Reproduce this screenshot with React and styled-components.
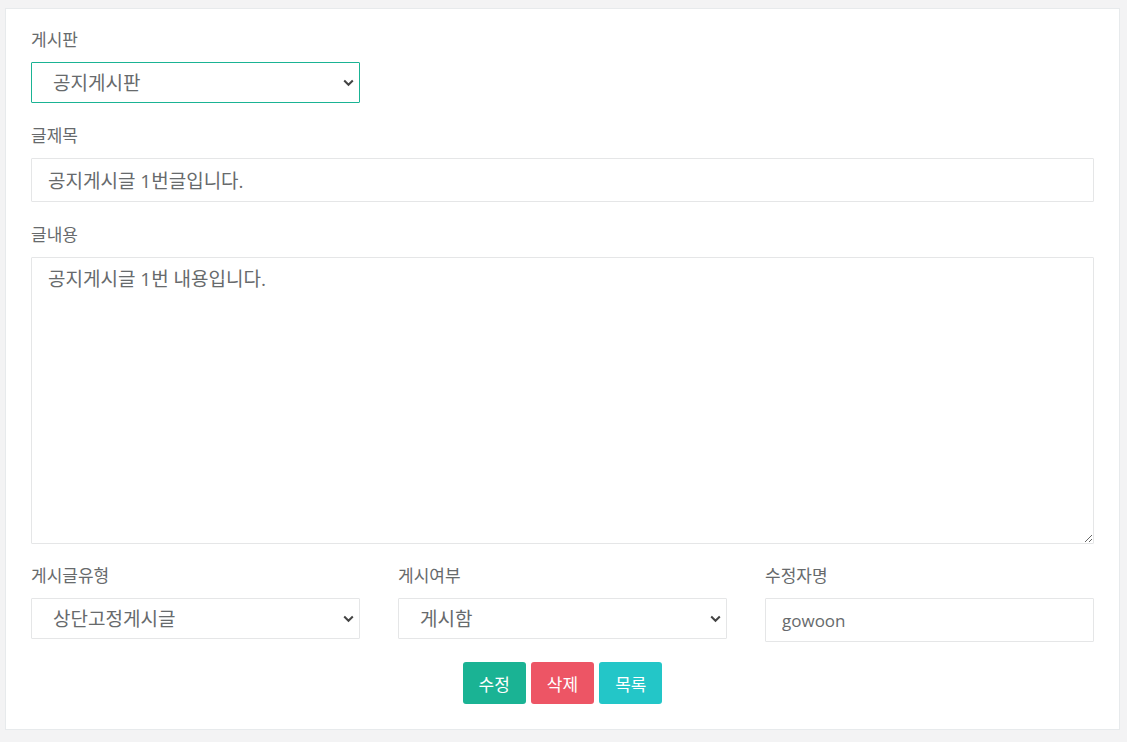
import React from 'react';
import styled, { createGlobalStyle } from 'styled-components';

const GlobalStyle = createGlobalStyle`
  * { box-sizing: border-box; }
  html, body { margin: 0; padding: 0; background: #f3f3f4; }
  body {
    padding: 8px 7px 13px 5px;
    font-family: "Open Sans", "Noto Sans CJK KR", sans-serif;
    color: #676a6c;
  }
`;

const Card = styled.div`
  background: #fff;
  border: 1px solid #e7eaec;
  padding: 19px 25px 25px 25px;
`;

const Group = styled.div`
  margin-bottom: ${({ gap }) => gap || '21px'};
  width: ${({ narrow }) => (narrow ? '329px' : 'auto')};
`;

const Label = styled.label`
  display: block;
  font-size: 17px;
  line-height: 24px;
  margin-bottom: 10px;
  color: #676a6c;
`;

const fieldBase = `
  display: block;
  width: 100%;
  font-family: "Open Sans", "Noto Sans CJK KR", sans-serif;
  color: #676a6c;
  background: #fff;
  border: 1px solid #e5e6e7;
  border-radius: 1px;
  outline: none;
`;

const Input = styled.input`
  ${fieldBase}
  font-size: ${({ latin }) => (latin ? '17px' : '19px')};
  height: 44px;
  padding: 0 16px;
`;

const TextArea = styled.textarea`
  ${fieldBase}
  font-size: 19px;
  height: 287px;
  padding: 9px 16px;
  line-height: 24px;
  resize: vertical;
`;

const SelectWrap = styled.div`
  position: relative;
`;

const Select = styled.select`
  ${fieldBase}
  font-size: 19px;
  appearance: none;
  height: 41px;
  padding: 0 30px 0 21px;
  border-color: ${({ active }) => (active ? '#1ab394' : '#e5e6e7')};
`;

const Chevron = styled.svg`
  position: absolute;
  right: 6px;
  top: 50%;
  margin-top: -4px;
  pointer-events: none;
`;

const Row = styled.div`
  display: grid;
  grid-template-columns: repeat(3, 1fr);
  column-gap: 38px;
`;

const Buttons = styled.div`
  display: flex;
  justify-content: center;
  gap: 5px;
`;

const Button = styled.button`
  height: 42px;
  padding: 0 16px;
  border: none;
  border-radius: 3px;
  color: #fff;
  font-family: "Open Sans", "Noto Sans CJK KR", sans-serif;
  font-size: 17px;
  background: ${({ color }) => color};
  cursor: pointer;
`;

const SelectBox = ({ value, options, active }) => (
  <SelectWrap>
    <Select defaultValue={value} active={active}>
      {options.map((o) => (
        <option key={o}>{o}</option>
      ))}
    </Select>
    <Chevron width="11" height="8" viewBox="0 0 11 8">
      <polyline
        points="1.2,1.5 5.5,5.8 9.8,1.5"
        fill="none"
        stroke="#444"
        strokeWidth="2"
      />
    </Chevron>
  </SelectWrap>
);

const App = () => (
  <>
    <GlobalStyle />
    <Card>
      <Group narrow>
        <Label>게시판</Label>
        <SelectBox value="공지게시판" options={['공지게시판', '자유게시판']} active />
      </Group>
      <Group>
        <Label>글제목</Label>
        <Input defaultValue="공지게시글 1번글입니다." />
      </Group>
      <Group gap="20px">
        <Label>글내용</Label>
        <TextArea defaultValue="공지게시글 1번 내용입니다." />
      </Group>
      <Row>
        <Group gap="20px">
          <Label>게시글유형</Label>
          <SelectBox value="상단고정게시글" options={['상단고정게시글', '일반게시글']} />
        </Group>
        <Group gap="20px">
          <Label>게시여부</Label>
          <SelectBox value="게시함" options={['게시함', '게시안함']} />
        </Group>
        <Group gap="20px">
          <Label>수정자명</Label>
          <Input latin defaultValue="gowoon" />
        </Group>
      </Row>
      <Buttons>
        <Button color="#1ab394">수정</Button>
        <Button color="#ed5565">삭제</Button>
        <Button color="#23c6c8">목록</Button>
      </Buttons>
    </Card>
  </>
);

export default App;
